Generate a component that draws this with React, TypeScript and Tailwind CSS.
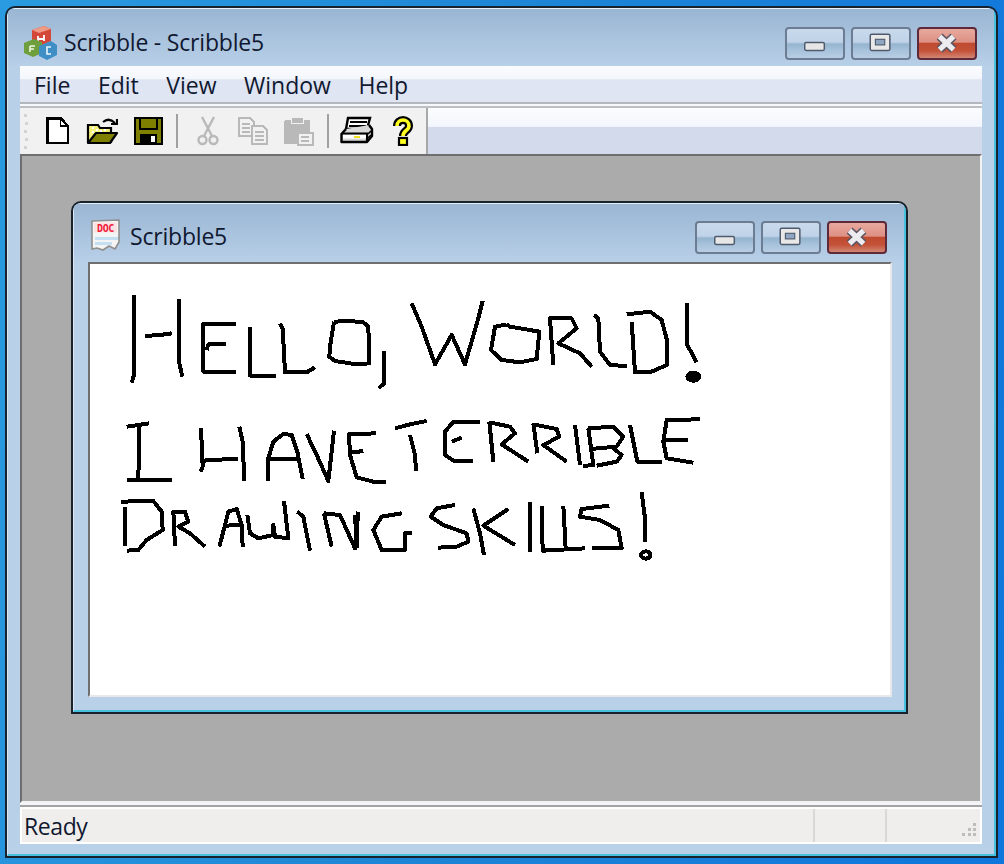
import React from "react";

function WinBtn({ kind }: { kind: "min" | "max" | "close" }) {
  const close = kind === "close";
  return (
    <div className={"relative w-[60px] h-[33px] rounded-[4px] border-2 flex items-center justify-center overflow-hidden " + (close ? "border-[#5e2a3a] bg-[linear-gradient(#e8a99e_0%,#de9084_45%,#bf4a2e_50%,#c45238_75%,#d28676_100%)]" : "border-[#6c7c92] bg-[linear-gradient(#c8d9eb_0%,#c0d3e8_45%,#96b4cf_52%,#a8c3dc_75%,#b8cee4_100%)]")}>
      <svg width="60" height="33" viewBox="0 0 60 33">
        {kind === "min" && <rect x="19" y="15.5" width="21" height="8.5" rx="1.5" fill="#e6e6e6" stroke="#4f5b6c" strokeWidth="1.6" />}
        {kind === "max" && (
          <g>
            <rect x="18.5" y="6.5" width="21" height="17.5" rx="1.5" fill="#e8e8e8" stroke="#4f5b6c" strokeWidth="1.6" />
            <rect x="24" y="12" width="10" height="6" fill="#8fa6c2" stroke="#4f5b6c" strokeWidth="1.2" />
          </g>
        )}
        {kind === "close" && (
          <g fill="none">
            <path d="M22 9 L37 23 M37 9 L22 23" stroke="#5d5560" strokeWidth="9" />
            <path d="M22 9 L37 23 M37 9 L22 23" stroke="#ecebf0" strokeWidth="5.5" />
          </g>
        )}
      </svg>
    </div>
  );
}

function WinBtns() {
  return (
    <div className="flex gap-[6px]">
      <WinBtn kind="min" />
      <WinBtn kind="max" />
      <WinBtn kind="close" />
    </div>
  );
}

function AppIcon() {
  return (
    <svg width="34" height="34" viewBox="0 0 34 34" className="shrink-0">
      <path d="M8 4 L20 0 L27 3 L27 15 L16 20 L8 15 Z" fill="#d4483a" />
      <path d="M8 4 L20 0 L27 3 L15 7 Z" fill="#ee9a84" />
      <path d="M14 10 v6 M20 9 v6 M14 13 h6" stroke="#fff" strokeWidth="1.8" fill="none" />
      <path d="M0 17 L10 13 L18 16 L18 27 L9 31 L0 27 Z" fill="#6f9e3c" />
      <path d="M6 20 v6 M6 20 h5 M6 23 h4" stroke="#eef6df" strokeWidth="1.6" fill="none" />
      <path d="M15 20 L27 15 L33 19 L33 29 L23 34 L15 30 Z" fill="#3f8fc6" />
      <path d="M27 21 h-4 v7 h4" stroke="#eaf5fc" strokeWidth="1.6" fill="none" />
    </svg>
  );
}

function DocIcon() {
  return (
    <svg width="32" height="32" viewBox="0 0 32 32" className="shrink-0">
      <path d="M2 2 L29 1 L29 23 L25 30 L19 27 L13 31 L7 29 L2 30 Z" fill="#f4f4f4" stroke="#8f8f8f" strokeWidth="1.6" />
      <rect x="4" y="3.5" width="23" height="10" fill="#fbe3e3" />
      <text x="15.5" y="12.5" textAnchor="middle" fontSize="10" fontWeight="700" fill="#f0203a" fontFamily="'DejaVu Sans Mono', monospace" letterSpacing="-0.4">DOC</text>
      <rect x="5" y="18" width="23" height="3" fill="#c4def2" />
      <rect x="5" y="23" width="17" height="3" fill="#c4def2" />
    </svg>
  );
}

const ink = "#000";

function NewIcon() {
  return (
    <svg width="24" height="28" viewBox="0 0 24 28" className="shrink-0" shapeRendering="crispEdges">
      <path d="M1.5 1.5 H15 L22 9 V26 H1.5 Z" fill="#fff" stroke={ink} strokeWidth="2.4" />
      <path d="M14.5 2 V9 H21" fill="none" stroke={ink} strokeWidth="1.6" />
    </svg>
  );
}

function OpenIcon() {
  return (
    <svg width="32" height="28" viewBox="0 0 32 28" className="shrink-0">
      <path d="M2 8 H12 L14 11 H25 V25 H2 Z" fill="#f6f07a" stroke={ink} strokeWidth="2.2" />
      <path d="M6 11 h2 M10 13 h2 M6 15 h2 M14 14 h2 M18 13 h2" stroke="#fff" strokeWidth="2" />
      <path d="M2 26 L10 16 H31 L24 26 Z" fill="#808000" stroke={ink} strokeWidth="2.2" strokeLinejoin="round" />
      <path d="M17 5 Q23 0 29 6" fill="none" stroke={ink} strokeWidth="2.2" />
      <path d="M25 7 H31 V2" fill="none" stroke={ink} strokeWidth="2.2" />
    </svg>
  );
}

function SaveIcon() {
  return (
    <svg width="29" height="28" viewBox="0 0 29 28" className="shrink-0" shapeRendering="crispEdges">
      <rect x="1" y="1" width="27" height="26" fill="#808000" stroke={ink} strokeWidth="2" />
      <rect x="6" y="1" width="17" height="11" fill="#808000" stroke={ink} strokeWidth="2" />
      <rect x="6" y="17" width="17" height="10" fill={ink} />
      <rect x="17" y="19" width="4" height="6" fill="#fff" />
    </svg>
  );
}

const dim = "#b9b9b9";

function CutIcon() {
  return (
    <svg width="22" height="30" viewBox="0 0 22 30" className="shrink-0">
      <g fill="none" stroke={dim} strokeWidth="2.4">
        <path d="M5 1 L15 20 M17 1 L7 20" />
        <circle cx="5.5" cy="24" r="4" />
        <circle cx="16.5" cy="24" r="4" />
      </g>
    </svg>
  );
}

function CopyIcon() {
  return (
    <svg width="31" height="28" viewBox="0 0 31 28" className="shrink-0" shapeRendering="crispEdges">
      <g fill="#f1f1f1" stroke={dim} strokeWidth="2">
        <path d="M1 1 H12 L16 5 V19 H1 Z" />
        <path d="M14 9 H25 L29 13 V27 H14 Z" />
      </g>
      <path d="M4 7 h8 M4 11 h8 M4 15 h8 M17 15 h9 M17 19 h9 M17 23 h9" stroke={dim} strokeWidth="2" />
    </svg>
  );
}

function PasteIcon() {
  return (
    <svg width="31" height="30" viewBox="0 0 31 30" className="shrink-0" shapeRendering="crispEdges">
      <rect x="1" y="4" width="26" height="24" rx="2" fill={dim} />
      <rect x="8" y="1" width="12" height="6" fill={dim} stroke="#f1f1f1" strokeWidth="1" />
      <rect x="15" y="17" width="15" height="12" fill="#f1f1f1" stroke={dim} strokeWidth="2" />
      <path d="M18 21 h8 M18 25 h8" stroke={dim} strokeWidth="2" />
    </svg>
  );
}

function PrintIcon() {
  return (
    <svg width="34" height="30" viewBox="0 0 34 30" className="shrink-0">
      <path d="M8 2 H30 L27 13 H6 Z" fill="#fff" stroke={ink} strokeWidth="2.4" />
      <path d="M10 6 h17 M9 10 h17" stroke={ink} strokeWidth="1.8" />
      <path d="M6 13 L1.5 18 V26 H27 L32 20 V13 L29 9" fill="#d8d8d8" stroke={ink} strokeWidth="2.4" strokeLinejoin="round" />
      <path d="M2 17.5 H27 V26" fill="none" stroke={ink} strokeWidth="2.2" />
      <rect x="3" y="19" width="23" height="3.5" fill="#fff" />
      <rect x="14" y="20" width="6" height="2" fill="#f0e020" />
      <path d="M28 18 l3 -3 M28 22 l3 -3" stroke={ink} strokeWidth="1.6" />
    </svg>
  );
}

function HelpIcon() {
  const q = "M5 10 C5 2 17 2 17 10 C17 15 11 14 11 20";
  return (
    <svg width="22" height="30" viewBox="0 0 22 30" className="shrink-0">
      <g fill="none">
        <path d={q} stroke={ink} strokeWidth="8" />
        <path d={q} stroke="#ffff20" strokeWidth="3.6" />
      </g>
      <rect x="7" y="22" width="8" height="7" fill="#ffff20" stroke={ink} strokeWidth="2.2" />
    </svg>
  );
}

function Sep({ className }: { className: string }) {
  return <div className={"w-[2px] h-[34px] bg-[#a0a0a0] shrink-0 " + className} />;
}

function Gripper() {
  return (
    <svg width="6" height="38" viewBox="0 0 6 38" className="shrink-0">
      {[2, 10, 18, 26, 34].map((y, i) => (
        <rect key={y} x={i % 2 ? 2 : 1} y={y} width="3" height="3" fill="#d4d4d4" />
      ))}
    </svg>
  );
}

function Drawing() {
  const a = [
    "M72 30 L72 270 L65 293",
    "M105 153 L150 150 L185 145",
    "M208 42 L208 235 L217 275",
    "M378 116 L280 116 L280 260 L378 262",
    "M290 195 L295 178 L347 177",
    "M420 125 L420 272 L497 272",
    "M510 115 L518 130 L525 262 L590 262 L615 247",
    "M672 110 L720 108 L760 112 L775 125 L778 235 L740 238 L675 228 L658 215 L660 185 L672 110",
    "M822 197 L822 295 L806 310",
    "M50 425 L85 420 L118 415",
    "M88 420 L85 585",
    "M50 586 L185 586",
    "M273 430 L278 545 L272 560",
    "M272 535 L290 525 L385 522",
    "M388 425 L398 470 L403 588",
    "M473 587 L475 520 L490 470 L520 447 L545 450 L562 500 L578 582",
    "M480 522 L560 522",
    "M590 447 L620 510 L655 588 L672 437",
    "M797 445 L717 448 L720 510 L740 577 L790 590 L827 592",
    "M722 503 L760 498",
    "M32 650 L130 648 L155 680 L158 735 L110 765 L85 795 L50 797",
    "M45 665 L45 782",
    "M195 782 L190 680 L225 680 L235 710 L205 725 L240 745 L285 785",
    "M328 785 L345 720 L355 680 L380 672 L395 720 L398 785",
    "M345 722 L395 720",
    "M412 690 L420 745 L445 760 L490 750 L490 720 L495 755 L535 760 L522 648",
    "M562 680 L580 695 L600 797",
    "M642 685 L665 785",
    "M642 685 L690 690 L735 790 L745 680",
    "M875 685 L815 695 L790 735 L815 795 L885 795 L885 745 L905 745",
  ];
  const b = [
    "M35 55 L65 125 L105 238 L155 150 L195 238 L235 100 L248 48",
    "M320 118 L285 125 L273 195 L305 225 L360 232 L410 222 L418 140 L330 125 L320 118",
    "M460 240 L450 100 L515 100 L530 130 L475 175 L540 205 L575 245",
    "M582 90 L595 100 L600 200 L630 240 L680 243",
    "M680 88 L750 80 L785 105 L802 170 L800 240 L750 262 L705 262 L695 110",
    "M862 55 L862 180 L890 232",
    "M-15 430 L30 418 L80 408",
    "M30 450 L45 510 L48 558",
    "M240 410 L160 410 L135 440 L135 510 L160 527 L220 527",
    "M155 470 L185 458",
    "M268 410 L280 530",
    "M268 412 L330 425 L345 445 L305 478 L385 530",
    "M400 415 L412 505",
    "M400 418 L470 432 L478 455 L430 480 L500 530",
    "M525 420 L540 540",
    "M565 430 L580 540 L548 543",
    "M565 430 L640 425 L670 455 L650 485 L570 492",
    "M640 490 L665 510 L650 530 L590 542",
    "M690 420 L712 530 L785 530",
    "M900 403 L800 405 L790 470 L800 520 L880 533",
    "M790 465 L865 465",
    "M165 660 L110 670 L92 695 L130 720 L200 745 L205 770 L170 785 L115 788",
    "M220 670 L240 745 L252 810",
    "M325 672 L250 722 L345 780",
    "M390 650 L390 800",
    "M425 662 L428 797 L555 790",
    "M490 662 L497 790",
    "M628 662 L545 672 L540 695 L600 705 L655 735 L665 790 L575 788",
    "M725 622 L735 700 L735 770",
  ];
  return (
    <svg width="800" height="431" viewBox="90 264 800 431" className="block" shapeRendering="crispEdges">
      <g fill="none" stroke="#000" strokeLinejoin="round">
        <g transform="translate(110 285) scale(0.33333)" strokeWidth="12">
          {a.map((d) => (
            <path key={d} d={d} />
          ))}
          <path d="M738 690 L740 790" strokeWidth="16" />
          <path d="M484 735 L496 735" strokeWidth="20" />
        </g>
        <g transform="translate(400 285) scale(0.33333)" strokeWidth="12">
          {b.map((d) => (
            <path key={d} d={d} />
          ))}
          <ellipse cx="880" cy="275" rx="18" ry="12" fill="#000" />
          <ellipse cx="737" cy="810" rx="14" ry="11" strokeWidth="12" />
        </g>
      </g>
    </svg>
  );
}

export default function App() {
  return (
    <div className="w-[1004px] h-[864px] overflow-hidden pl-[5px] pr-[6px] pt-[6px] pb-[6px] bg-[linear-gradient(100deg,#2a9be0_0%,#1e86d6_45%,#0f76dc_100%)] [font-family:'Open_Sans',sans-serif] text-[#101830]">
      <div className="h-full border-2 border-[#18222c] rounded-t-[10px] overflow-hidden">
        <div className="h-full flex flex-col border-t border-l border-t-[#e8f0f8] border-l-[#dbe8f4] border-r-2 border-b-2 border-r-[#46c2dc] border-b-[#46c2dc] rounded-t-[8px] bg-[#b9d0e9] pl-[12px] pr-[12px] pb-[10px]">
          <div className="h-[57px] shrink-0 -mx-[12px] px-[16px] flex items-start bg-[linear-gradient(#9ab6d3,#b8cfe8)]">
            <div className="mt-[17px]"><AppIcon /></div>
            <span className="ml-[6px] text-[23px] leading-none tracking-[-0.2px] flex-1 mt-[22px]">Scribble - Scribble5</span>
            <div className="mr-[1px] mt-[18px]">
              <WinBtns />
            </div>
          </div>

          <div className="h-[36px] shrink-0 flex items-center pl-[14px] gap-[27.5px] text-[23px] pt-[2px] bg-[linear-gradient(#fbfcfe_0%,#f3f6fc_36%,#dfe5f2_38%,#dfe5f2_100%)]">
            <span>File</span>
            <span>Edit</span>
            <span>View</span>
            <span>Window</span>
            <span>Help</span>
          </div>
          <div className="h-[2px] shrink-0 bg-[#b4b8be]" />
          <div className="h-[2px] shrink-0 bg-[#f6f8fc]" />
          <div className="h-[2px] shrink-0 bg-[#bcbfc4]" />

          <div className="h-[46px] shrink-0 flex bg-[linear-gradient(#fbfcfe_0%,#f3f6fc_40%,#d3daeb_42%,#d3daeb_100%)]">
            <div className="w-[408px] flex items-center bg-[#f1f1f1] border-r-2 border-r-[#a8a8a8] pl-[3px]">
              <Gripper />
              <div className="ml-[17px]"><NewIcon /></div>
              <div className="ml-[16px]"><OpenIcon /></div>
              <div className="ml-[16px]"><SaveIcon /></div>
              <Sep className="ml-[13px]" />
              <div className="ml-[19px]"><CutIcon /></div>
              <div className="ml-[19px]"><CopyIcon /></div>
              <div className="ml-[14px]"><PasteIcon /></div>
              <Sep className="ml-[13px]" />
              <div className="ml-[11px]"><PrintIcon /></div>
              <div className="ml-[18px]"><HelpIcon /></div>
            </div>
          </div>

          <div className="flex-1 min-h-0 border-2 border-t-[#6f6f6f] border-l-[#6f6f6f] border-r-[#f2f2f2] border-b-[#f2f2f2] bg-[#ababab] pl-[49px] pt-[45px]">
            <div className="w-[837px] h-[513px] border-2 border-[#18222c] rounded-t-[10px] overflow-hidden">
              <div className="h-full flex flex-col border-t border-l border-t-[#e8f0f8] border-l-[#dbe8f4] border-r-2 border-b-2 border-r-[#46c2dc] border-b-[#46c2dc] rounded-t-[8px] bg-[#b9d0e9] pl-[14px] pr-[12px] pb-[13px]">
                <div className="h-[58px] shrink-0 -ml-[14px] -mr-[12px] pl-[16px] pr-[17px] flex items-start bg-[linear-gradient(#9ab6d3,#b8cfe8)]">
                  <div className="mt-[15px]"><DocIcon /></div>
                  <span className="ml-[8px] text-[23px] leading-none tracking-[-0.2px] flex-1 mt-[21px]">Scribble5</span>
                  <div className="mt-[17px]">
                    <WinBtns />
                  </div>
                </div>
                <div className="flex-1 min-h-0 bg-white border-2 border-t-[#6f6f6f] border-l-[#6f6f6f] border-r-[#e8e8e8] border-b-[#e8e8e8]">
                  <Drawing />
                </div>
              </div>
            </div>
          </div>

          <div className="h-[2px] shrink-0 bg-[#f4f6fa]" />
          <div className="h-[2px] shrink-0 bg-[#a3a3a3]" />
          <div className="h-[37px] shrink-0 flex items-stretch border-2 border-white bg-[#f0eeed] text-[23px]">
            <div className="w-[791px] pl-[2px] pt-[2px] flex items-center tracking-[-0.4px]">Ready</div>
            <div className="w-[72px] border-l-2 border-l-[#d8d8d8]" />
            <div className="flex-1 border-l-2 border-l-[#d8d8d8] flex items-end justify-end pr-[3px] pb-[3px]">
              <svg width="18" height="18" viewBox="0 0 18 18">
                {[[14, 2], [9, 7], [14, 7], [3, 12], [9, 12], [14, 12]].map(([x, y]) => (
                  <rect key={x + "-" + y} x={x} y={y} width="3" height="3" fill="#bdbdbd" />
                ))}
              </svg>
            </div>
          </div>
        </div>
      </div>
    </div>
  );
}
